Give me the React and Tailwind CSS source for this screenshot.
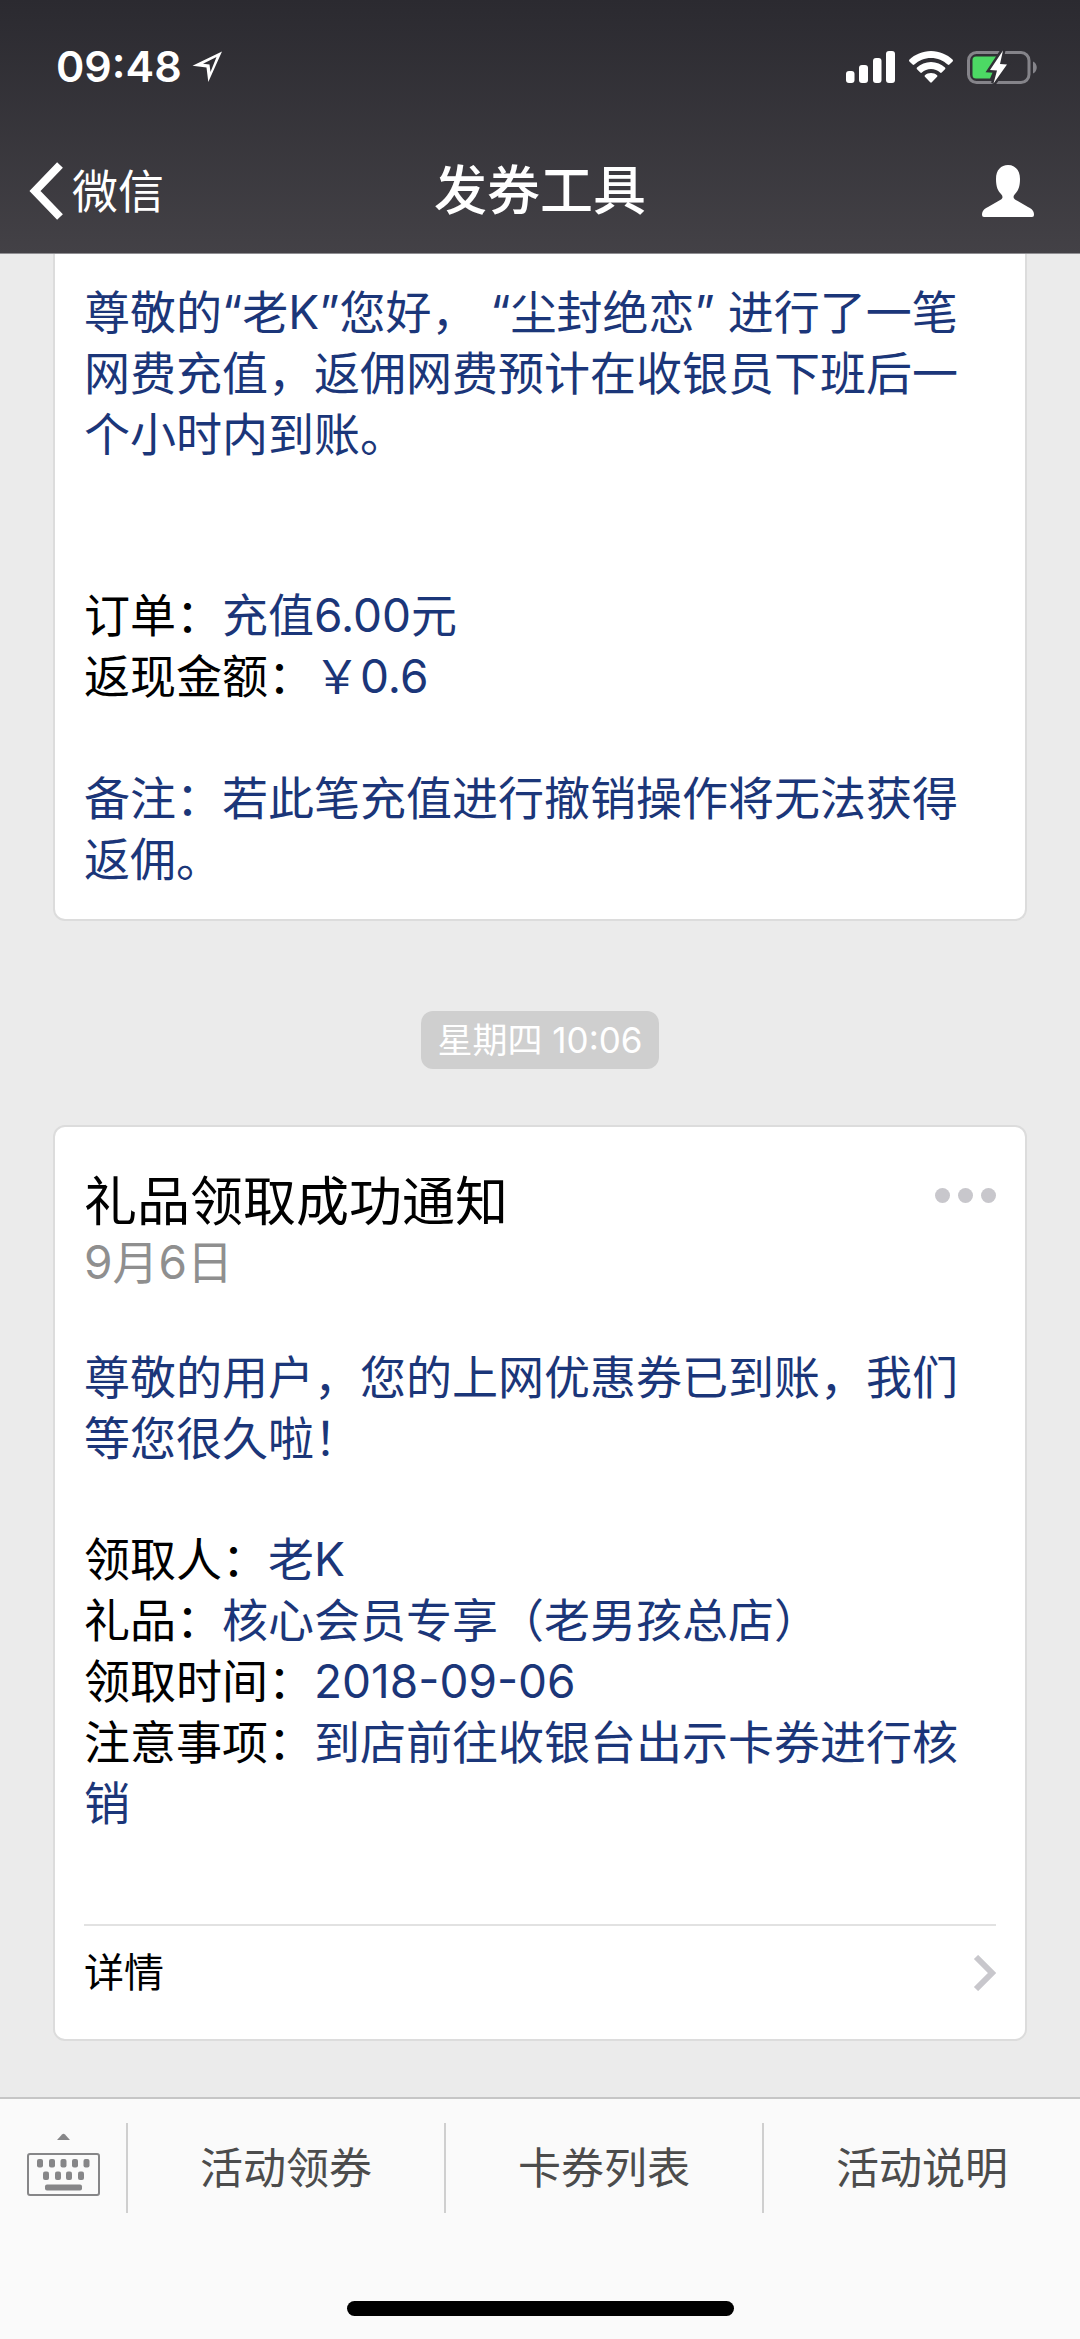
import React from 'react';

const tabs = ['活动领券', '卡券列表', '活动说明'];

const giftFields = [
  { label: '领取人', value: '老K' },
  { label: '礼品', value: '核心会员专享（老男孩总店）' },
  { label: '领取时间', value: '2018-09-06' },
  { label: '注意事项', value: '到店前往收银台出示卡券进行核销' },
];

const LocationIcon = () => (
  <svg width="31" height="32" viewBox="0 0 31 32" fill="white" fillRule="evenodd">
    <path d="M30 0.500 L0.500 14.700 L14.500 16.500 L16.300 31 Z M24.500 6 L18.500 21 L17.500 13.500 L11 12.800 Z" />
  </svg>
);

const SignalIcon = () => (
  <svg width="49" height="32" viewBox="0 0 49 32" fill="white">
    <rect x="0" y="20" width="8.500" height="12" rx="3" />
    <rect x="13" y="14" width="9" height="18" rx="3" />
    <rect x="27" y="7" width="8.500" height="25" rx="3" />
    <rect x="40" y="0" width="9" height="32" rx="3" />
  </svg>
);

const WifiIcon = () => (
  <svg width="44" height="32" viewBox="0 0 44 32" fill="white">
    <path d="M22 0 C13.500 0 5.800 3.500 0.500 8.600 C-0.100 9.200 -0.100 9.900 0.400 10.400 L3.600 13.600 C4.100 14.100 4.800 14.100 5.300 13.600 C9.700 9.500 15.500 7 22 7 C28.500 7 34.300 9.500 38.700 13.600 C39.200 14.100 39.900 14.100 40.400 13.600 L43.600 10.400 C44.100 9.900 44.100 9.200 43.500 8.600 C38.200 3.500 30.500 0 22 0 Z" />
    <path d="M22 11 C16.600 11 11.700 13.100 8 16.500 C7.500 17 7.500 17.700 8 18.200 L11.300 21.500 C11.800 22 12.400 22 12.900 21.500 C15.300 19.400 18.500 18 22 18 C25.500 18 28.700 19.400 31.100 21.500 C31.600 22 32.200 22 32.700 21.500 L36 18.200 C36.500 17.700 36.500 17 36 16.500 C32.300 13.100 27.400 11 22 11 Z" />
    <path d="M22 22 C19.600 22 17.500 22.900 15.900 24.300 C15.400 24.800 15.400 25.300 15.900 25.800 L21.200 31.300 C21.700 31.800 22.300 31.800 22.800 31.300 L28.100 25.800 C28.600 25.300 28.600 24.800 28.100 24.300 C26.500 22.900 24.400 22 22 22 Z" />
  </svg>
);

const BatteryIcon = () => (
  <svg width="71" height="36" viewBox="0 0 71 36">
    <rect x="1.500" y="3.500" width="60.500" height="30" rx="8" fill="none" stroke="#85848a" strokeWidth="3" />
    <path d="M66 12.500 C71 14.500 71 22.500 66 24.500 Z" fill="#85848a" />
    <path d="M9 7.500 H30 L20 22.500 H26 L23 29.500 H9 Q5.500 29.500 5.500 26 V11 Q5.500 7.500 9 7.500 Z" fill="#4cd964" />
    <path d="M36 1.500 L23 21 L30 21.500 L26.500 34.500 L40 15.500 L33 15 Z" fill="white" stroke="#313036" strokeWidth="5" paintOrder="stroke" />
  </svg>
);

const PersonIcon = () => (
  <svg width="52" height="52" viewBox="0 0 52 52" fill="white">
    <path d="M26 0 C33 0 38 5 38 14 C38 22 36 26 33 29 C31 31 31 33 33 34.500 L46 42 C50 44 52 46 52 50 Q52 52 50 52 H2 Q0 52 0 50 C0 46 2 44 6 42 L19 34.500 C21 33 21 31 19 29 C16 26 14 22 14 14 C14 5 19 0 26 0 Z" />
  </svg>
);

const KeyboardIcon = () => (
  <svg width="73" height="63" viewBox="0 0 73 63" fill="#868688">
    <path d="M30 7 L35 1.500 Q36.500 0 38 1.500 L43 7 Z" />
    <rect x="1" y="21" width="71" height="41" rx="2" fill="none" stroke="#868688" strokeWidth="2" />
    <rect x="10" y="26" width="6" height="8.500" rx="2" />
    <rect x="22" y="26" width="6" height="8.500" rx="2" />
    <rect x="33.500" y="26" width="6" height="8.500" rx="2" />
    <rect x="45" y="26" width="6" height="8.500" rx="2" />
    <rect x="56.500" y="26" width="6" height="8.500" rx="2" />
    <rect x="16" y="38.500" width="6" height="8.500" rx="2" />
    <rect x="28" y="38.500" width="6" height="8.500" rx="2" />
    <rect x="39" y="38.500" width="6" height="8.500" rx="2" />
    <rect x="51" y="38.500" width="6" height="8.500" rx="2" />
    <rect x="18" y="51.500" width="37" height="6" rx="2" />
  </svg>
);

const StatusBar = () => (
  <div className="flex h-[129px] items-center justify-between pt-1 pr-[42px] pl-14 text-white">
    <div className="flex items-center gap-2.5">
      <span className="text-[43px] font-semibold">09:48</span>
      <LocationIcon />
    </div>
    <div className="flex items-center gap-3.5">
      <SignalIcon />
      <WifiIcon />
      <BatteryIcon />
    </div>
  </div>
);

const Header = () => (
  <header className="border-b border-[#8f8e92] bg-linear-to-b from-[#2b2a30] to-[#434146] text-white">
    <StatusBar />
    <nav className="flex h-31 items-center px-7">
      <button type="button" className="flex flex-1 items-center gap-2 text-[46px]">
        <svg width="36" height="60" viewBox="0 0 36 60" fill="none" stroke="white" strokeWidth="8">
          <path d="M32 4 L7 30 L32 56" />
        </svg>
        微信
      </button>
      <h1 className="text-[53px] leading-[60px] font-medium">发券工具</h1>
      <div className="flex flex-1 justify-end">
        <button type="button" aria-label="公众号资料" className="pr-[18px]">
          <PersonIcon />
        </button>
      </div>
    </nav>
  </header>
);

const Field = ({ label, value }) => (
  <p>
    <span className="text-black">{label}：</span>
    {value}
  </p>
);

const RebateCard = () => (
  <article className="rounded-b-xl border-2 border-t-0 border-[#dcdcdc] bg-white px-[29px] pt-7 pb-[29px] text-[46px] leading-[61px] text-[#1b3679]">
    <p>尊敬的“老K”您好， “尘封绝恋” 进行了一笔网费充值，返佣网费预计在收银员下班后一个小时内到账。</p>
    <div className="mt-30">
      <Field label="订单" value="充值6.00元" />
      <Field label="返现金额" value="￥0.6" />
    </div>
    <p className="mt-[61px]">备注：若此笔充值进行撤销操作将无法获得返佣。</p>
  </article>
);

const GiftCard = () => (
  <article className="rounded-xl border-2 border-[#dcdcdc] bg-white px-[29px] pt-[45px] text-[46px] leading-[61px] text-[#1b3679]">
    <div className="flex items-start justify-between">
      <h2 className="text-[53px] leading-[60px] text-black">礼品领取成功通知</h2>
      <button type="button" aria-label="更多" className="flex gap-2 pt-4">
        <span className="size-[15px] rounded-full bg-[#c8c7cc]" />
        <span className="size-[15px] rounded-full bg-[#c8c7cc]" />
        <span className="size-[15px] rounded-full bg-[#c8c7cc]" />
      </button>
    </div>
    <p className="text-[#8f8f8f]">9月6日</p>
    <p className="mt-[54px]">尊敬的用户，您的上网优惠券已到账，我们等您很久啦！</p>
    <div className="mt-15">
      {giftFields.map((field) => (
        <Field key={field.label} label={field.label} value={field.value} />
      ))}
    </div>
    <a href="#detail" className="mt-[90px] flex items-center justify-between border-t-2 border-[#e2e2e2] pt-4 pb-9 text-[40px] text-black">
      详情
      <svg width="23" height="36" viewBox="0 0 23 36" fill="none" stroke="#c8c7cc" strokeWidth="6">
        <path d="M3 2 L19 18 L3 34" />
      </svg>
    </a>
  </article>
);

const App = () => {
  return (
    <div className="flex min-h-screen flex-col bg-[#ebebeb] font-['Inter','Noto_Sans_CJK_SC',sans-serif]" lang="zh-CN">
      <Header />

      <main className="flex-1 px-[53px]">
        <RebateCard />
        <div className="mt-[90px] mb-14 flex justify-center">
          <time className="rounded-xl bg-[#cfcfcf] px-4 text-[35px] leading-[58px] text-white">星期四 10:06</time>
        </div>
        <GiftCard />
      </main>

      <footer className="border-t-2 border-[#c6c6c6] bg-[#fafafa] pt-6">
        <div className="flex h-[90px] items-stretch">
          <button type="button" aria-label="切换键盘" className="flex w-[126px] justify-center pt-2.5">
            <KeyboardIcon />
          </button>
          {tabs.map((tab) => (
            <button key={tab} type="button" className="flex-1 border-l-2 border-[#cfcfcf] text-[43px] text-[#4c4c4c]">
              {tab}
            </button>
          ))}
        </div>
        <div className="mx-auto mt-22 mb-[23px] h-[15px] w-[387px] rounded-full bg-black" />
      </footer>
    </div>
  );
};

export default App;
